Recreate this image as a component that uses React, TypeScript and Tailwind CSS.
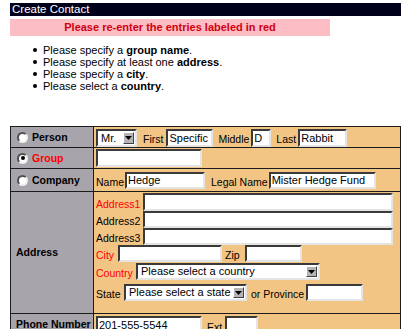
import React from "react";

const inset =
  "bg-white border-2 border-t-[#3a3a3a] border-l-[#3a3a3a] border-r-[#e4e4e4] border-b-[#e4e4e4]";

function Input({ cls, text }: { cls: string; text?: string }) {
  return (
    <div className={`${inset} ${cls} shrink-0 flex items-center overflow-hidden`}>
      <span className="pl-[1px] text-[11px] leading-none whitespace-nowrap">{text}</span>
    </div>
  );
}

function Select({ cls, text }: { cls: string; text: string }) {
  return (
    <div className={`${inset} ${cls} shrink-0 flex items-stretch overflow-hidden`}>
      <span className="flex-1 flex items-center pl-[3px] text-[11px] leading-none whitespace-nowrap overflow-hidden">
        {text}
      </span>
      <span className="w-[11px] my-[1px] mr-[1px] bg-[#b4b4b8] border border-t-white border-l-white border-r-[#404040] border-b-[#404040] flex items-center justify-center">
        <svg width="7" height="4" viewBox="0 0 7 4">
          <path d="M0 0h7L3.5 4z" fill="#000" />
        </svg>
      </span>
    </div>
  );
}

function Radio({ checked }: { checked?: boolean }) {
  return (
    <span className="w-[11px] h-[11px] rounded-full bg-white border-2 border-t-[#505050] border-l-[#505050] border-r-[#f0f0f0] border-b-[#f0f0f0] flex items-center justify-center shrink-0">
      {checked && <span className="w-[4px] h-[4px] rounded-full bg-black" />}
    </span>
  );
}

const left = "bg-[#a8a4ac] flex items-center";
const right = "bg-[#f3c585]";
const lbl = "shrink-0 whitespace-nowrap";

export default function App() {
  return (
    <div className="w-[411px] h-[329px] overflow-hidden bg-white text-black font-['Liberation_Sans',Arial,sans-serif]">
      <div className="pl-[10px] pt-[3px]">
        <div className="w-[391px] h-[13px] bg-[#00001a] text-white text-[11.5px] leading-[13px] pl-[2px]">
          Create Contact
        </div>
        <div className="mt-[3px] w-[320px] h-[17px] bg-[#fdbdc5] text-[#d00010] font-bold text-[11px] leading-[17px] text-center">
          Please re-enter the entries labeled in red
        </div>
        <ul className="mt-[8px] pl-[23px] text-[11px] leading-[12px]">
          <li className="flex items-center">
            <span className="w-[4px] h-[4px] bg-black rounded-full mr-[6px]" />
            <span>
              Please specify a <b>group name</b>.
            </span>
          </li>
          <li className="flex items-center">
            <span className="w-[4px] h-[4px] bg-black rounded-full mr-[6px]" />
            <span>
              Please specify at least one <b>address</b>.
            </span>
          </li>
          <li className="flex items-center">
            <span className="w-[4px] h-[4px] bg-black rounded-full mr-[6px]" />
            <span>
              Please specify a <b>city</b>.
            </span>
          </li>
          <li className="flex items-center">
            <span className="w-[4px] h-[4px] bg-black rounded-full mr-[6px]" />
            <span>
              Please select a <b>country</b>.
            </span>
          </li>
        </ul>

        <div className="mt-[34px] w-[391px] bg-[#1c1c1c] p-px grid grid-cols-[82px_306px] gap-px text-[10.5px] leading-[13px]">
          {/* Person */}
          <div className={`${left} h-[20px] pl-[6px] gap-[4px]`}>
            <Radio />
            <span className="font-bold">Person</span>
          </div>
          <div className={`${right} h-[20px] pl-[2px] flex items-end`}>
            <Select cls="w-[41px] h-[18px]" text="Mr." />
            <span className={`${lbl} ml-[6px] mr-[3px] pb-[1px]`}>First</span>
            <Input cls="w-[47px] h-[18px]" text="Specific" />
            <span className={`${lbl} ml-[5px] mr-[2px] pb-[1px]`}>Middle</span>
            <Input cls="w-[20px] h-[18px]" text="D" />
            <span className={`${lbl} ml-[5px] mr-[2px] pb-[1px]`}>Last</span>
            <Input cls="w-[49px] h-[18px]" text="Rabbit" />
          </div>

          {/* Group */}
          <div className={`${left} h-[20px] pl-[6px] gap-[4px]`}>
            <Radio checked />
            <span className="font-bold text-[#ff0000]">Group</span>
          </div>
          <div className={`${right} h-[20px] pl-[2px] flex items-center`}>
            <Input cls="w-[106px] h-[18px]" />
          </div>

          {/* Company */}
          <div className={`${left} h-[22px] pl-[6px] gap-[4px]`}>
            <Radio />
            <span className="font-bold">Company</span>
          </div>
          <div className={`${right} h-[22px] pl-[2px] flex items-end pb-[2px]`}>
            <span className={`${lbl} w-[29px]`}>Name</span>
            <Input cls="w-[80px] h-[17px]" text="Hedge" />
            <span className={`${lbl} ml-[6px] mr-[1px]`}>Legal Name</span>
            <Input cls="w-[107px] h-[17px]" text="Mister Hedge Fund" />
          </div>

          {/* Address */}
          <div className={`${left} h-[121px] pl-[5px]`}>
            <span className="font-bold">Address</span>
          </div>
          <div className={`${right} h-[121px] pl-[2px] pt-[1px] flex flex-col`}>
            <div className="flex items-end h-[18px]">
              <span className={`${lbl} w-[47px] text-[#ff0000]`}>Address1</span>
              <Input cls="w-[250px] h-[18px]" />
            </div>
            <div className="flex items-end h-[17px]">
              <span className={`${lbl} w-[47px]`}>Address2</span>
              <Input cls="w-[250px] h-[17px]" />
            </div>
            <div className="flex items-end h-[17px]">
              <span className={`${lbl} w-[47px]`}>Address3</span>
              <Input cls="w-[250px] h-[17px]" />
            </div>
            <div className="flex items-end h-[17px]">
              <span className={`${lbl} w-[22px] text-[#ff0000]`}>City</span>
              <Input cls="w-[104px] h-[17px]" />
              <span className={`${lbl} ml-[3px] w-[20px]`}>Zip</span>
              <Input cls="w-[57px] h-[17px]" />
            </div>
            <div className="flex items-end h-[17px] mt-[1px]">
              <span className={`${lbl} w-[40px] text-[#ff0000]`}>Country</span>
              <Select cls="w-[184px] h-[17px]" text="Please select a country" />
            </div>
            <div className="flex items-end h-[17px] mt-[4px]">
              <span className={`${lbl} w-[28px]`}>State</span>
              <Select cls="w-[123px] h-[17px]" text="Please select a state" />
              <span className={`${lbl} ml-[4px] mr-[2px]`}>or Province</span>
              <Input cls="w-[57px] h-[17px]" />
            </div>
          </div>

          {/* Phone */}
          <div className={`${left} h-[20px] pl-[5px]`}>
            <span className="font-bold whitespace-nowrap">Phone Number</span>
          </div>
          <div className={`${right} h-[20px] pl-[2px] flex items-end`}>
            <Input cls="w-[106px] h-[18px]" text="201-555-5544" />
            <span className={`${lbl} ml-[5px] w-[18px]`}>Ext</span>
            <Input cls="w-[33px] h-[18px]" />
          </div>
        </div>
      </div>
    </div>
  );
}
